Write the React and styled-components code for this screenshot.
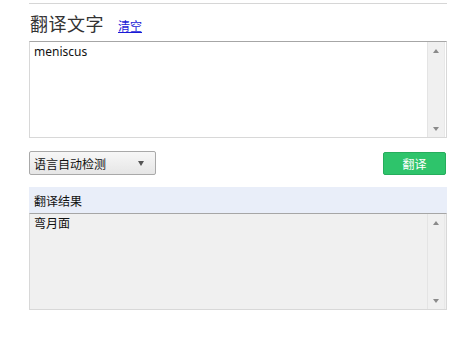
import React from "react";
import styled, { createGlobalStyle } from "styled-components";

const GlobalStyle = createGlobalStyle`
  * {
    box-sizing: border-box;
  }
  body {
    margin: 0;
    background: #fff;
    font-family: "Noto Sans", "Noto Sans CJK SC", sans-serif;
    font-size: 12px;
    color: #222;
  }
`;

const Page = styled.div`
  width: 475px;
  height: 338px;
  padding: 3px 28px 0 29px;
`;

const Panel = styled.div`
  border-top: 1px solid #d6d6d6;
  display: flex;
  flex-direction: column;
`;

const TitleRow = styled.div`
  display: flex;
  align-items: baseline;
  gap: 14px;
  height: 26px;
  margin-top: 6px;
  margin-left: 1px;
`;

const Title = styled.h2`
  margin: 0;
  font-family: "Noto Sans CJK SC", sans-serif;
  font-weight: normal;
  font-size: 18px;
  line-height: 26px;
  color: #333;
  letter-spacing: 0.5px;
`;

const ClearLink = styled.a`
  font-family: "Noto Sans CJK SC", sans-serif;
  font-size: 12px;
  color: #1a1ad6;
  text-decoration: underline;
`;

const Field = styled.div`
  display: flex;
  height: ${(p) => p.$height}px;
  margin-top: ${(p) => p.$top}px;
  background: ${(p) => p.$bg};
  border: 1px solid #d8d8d8;
  border-top-color: ${(p) => p.$topColor};
`;

const FieldText = styled.div`
  flex: 1;
  padding: 2px 4px;
  line-height: 16px;
  font-size: 12px;
  color: #111;
`;

const Scrollbar = styled.div`
  width: 18px;
  margin: 0 1px 0 0;
  background: #f0f0f0;
  border-left: 1px solid #e4e4e4;
  border-right: 1px solid #e8e8e8;
  display: flex;
  flex-direction: column;
  justify-content: space-between;
  align-items: center;
  padding: 7px 0 6px;
`;

const Arrow = styled.span`
  width: 0;
  height: 0;
  border-left: 3.5px solid transparent;
  border-right: 3.5px solid transparent;
  ${(p) =>
    p.$up
      ? "border-bottom: 4px solid #8a8a8a;"
      : "border-top: 4px solid #8a8a8a;"}
`;

const Controls = styled.div`
  display: flex;
  justify-content: space-between;
  align-items: center;
  height: 24px;
  margin-top: 13px;
`;

const Select = styled.div`
  width: 127px;
  height: 24px;
  display: flex;
  align-items: center;
  justify-content: space-between;
  padding: 0 11px 0 4px;
  border: 1px solid #a9a9a9;
  border-radius: 2px;
  background: linear-gradient(#f7f7f7, #e6e6e6);
  font-family: "Noto Sans CJK SC", sans-serif;
  font-size: 12px;
  color: #111;
`;

const Caret = styled.span`
  width: 0;
  height: 0;
  border-left: 3.5px solid transparent;
  border-right: 3.5px solid transparent;
  border-top: 5px solid #555;
`;

const Button = styled.button`
  width: 63px;
  height: 23px;
  margin-right: 1px;
  border: 1px solid #26ad5c;
  border-radius: 2px;
  background: #2ec46b;
  color: #fff;
  font-family: "Noto Sans CJK SC", sans-serif;
  font-size: 12px;
  padding: 0;
`;

const ResultHeader = styled.div`
  height: 26px;
  margin-top: 12px;
  display: flex;
  align-items: center;
  padding-left: 5px;
  background: #e9eef9;
  font-family: "Noto Sans CJK SC", sans-serif;
  font-size: 12px;
  color: #111;
`;

export default function App() {
  return (
    <>
      <GlobalStyle />
      <Page>
        <Panel>
          <TitleRow>
            <Title>翻译文字</Title>
            <ClearLink href="#">清空</ClearLink>
          </TitleRow>
          <Field $height={97} $top={5} $bg="#fff" $topColor="#a6a6a6">
            <FieldText>meniscus</FieldText>
            <Scrollbar>
              <Arrow $up />
              <Arrow />
            </Scrollbar>
          </Field>
          <Controls>
            <Select>
              <span>语言自动检测</span>
              <Caret />
            </Select>
            <Button>翻译</Button>
          </Controls>
          <ResultHeader>翻译结果</ResultHeader>
          <Field $height={97} $top={0} $bg="#f0f0f0" $topColor="#a6a6a6">
            <FieldText>弯月面</FieldText>
            <Scrollbar>
              <Arrow $up />
              <Arrow />
            </Scrollbar>
          </Field>
        </Panel>
      </Page>
    </>
  );
}
